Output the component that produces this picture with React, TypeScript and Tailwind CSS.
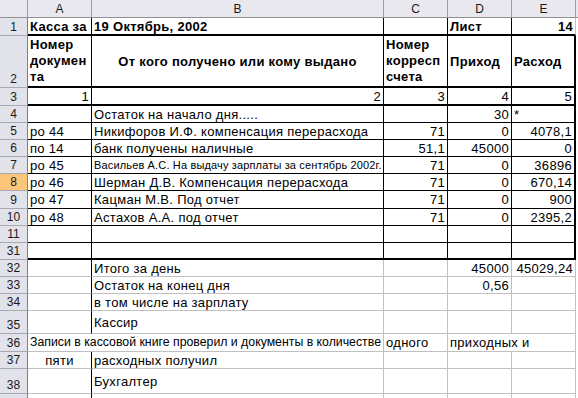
import React from "react";

const F = "font-['Liberation_Sans',Arial,sans-serif]";

const RH =
  "w-[28px] shrink-0 bg-[#e2e2ea] border-r border-b border-r-[#7f7f86] border-b-[#a8a8b0] text-[12px] leading-none flex items-end justify-center pb-[2px] text-[#1a1a1a]";
const RH_SEL =
  "w-[28px] shrink-0 bg-[#fbc67a] border-r border-b border-r-[#7f7f86] border-b-[#a8a8b0] text-[12px] leading-none flex items-end justify-center pb-[2px] text-[#1a1a1a]";

const CH =
  "shrink-0 bg-[#e8e8ee] border-r border-b border-r-[#9d9da4] border-b-[#8f8f96] text-[12px] leading-none flex items-center justify-center text-[#1a1a1a]";

// body cell base
const C =
  "shrink-0 flex items-center px-[2px] overflow-hidden whitespace-nowrap text-[13px] leading-[15px] tracking-[0.3px] text-black";

// border presets
const TB = "border-r border-b border-r-black border-b-black"; // thin black
const TB2 = "border-r border-b-2 border-r-black border-b-black"; // thin right, thick bottom
const EB = "border-r-2 border-b border-r-black border-b-black"; // E column thin bottom
const EB2 = "border-r-2 border-b-2 border-r-black border-b-black"; // E column thick bottom
const G = "border-r border-b border-r-[#c0c0c0] border-b-[#c0c0c0]"; // gray grid
const GA = "border-r border-b border-r-black border-b-[#c0c0c0]"; // A in bottom part
const GN = "border-b border-b-[#c0c0c0]"; // no right line

type DataRow = {
  n: string;
  a: string;
  b: string;
  c: string;
  d: string;
  e: string;
  small?: boolean;
  sel?: boolean;
};

const rows: DataRow[] = [
  { n: "5", a: "ро 44", b: "Никифоров И.Ф. компенсация перерасхода", c: "71", d: "0", e: "4078,1" },
  { n: "6", a: "по 14", b: "банк получены наличные", c: "51,1", d: "45000", e: "0" },
  {
    n: "7",
    a: "ро 45",
    b: "Васильев А.С. На выдачу зарплаты за сентябрь 2002г.",
    c: "71",
    d: "0",
    e: "36896",
    small: true,
  },
  { n: "8", a: "ро 46", b: "Шерман Д.В. Компенсация перерасхода", c: "71", d: "0", e: "670,14", sel: true },
  { n: "9", a: "ро 47", b: "Кацман М.В. Под отчет", c: "71", d: "0", e: "900" },
  { n: "10", a: "ро 48", b: "Астахов А.А. под отчет", c: "71", d: "0", e: "2395,2" },
];

export default function App() {
  return (
    <div className={`w-[578px] h-[398px] overflow-hidden bg-white ${F}`}>
      {/* column header */}
      <div className="flex h-[18px]">
        <div className="w-[28px] shrink-0 bg-[#e8e8ee] border-r border-b border-r-[#9d9da4] border-b-[#8f8f96]" />
        <div className={`${CH} w-[64px]`}>A</div>
        <div className={`${CH} w-[292px]`}>B</div>
        <div className={`${CH} w-[64px]`}>C</div>
        <div className={`${CH} w-[64px]`}>D</div>
        <div className={`${CH} w-[64px]`}>E</div>
        <div className="flex-1 bg-[#e8e8ee] border-b border-b-[#8f8f96]" />
      </div>

      {/* row 1 */}
      <div className="flex h-[18px]">
        <div className={RH}>1</div>
        <div className={`${C} ${TB2} w-[64px] font-bold`}>Касса за</div>
        <div className={`${C} ${TB2} w-[292px] font-bold`}>19 Октябрь, 2002</div>
        <div className={`${C} ${TB2} w-[64px]`} />
        <div className={`${C} ${TB2} w-[64px] font-bold`}>Лист</div>
        <div className={`${C} border-r border-b-2 border-r-[#c0c0c0] border-b-black w-[64px] font-bold justify-end`}>14</div>
      </div>

      {/* row 2 */}
      <div className="flex h-[52px]">
        <div className={RH}>2</div>
        <div className={`${C} ${TB2} w-[64px] font-bold !items-end !leading-[16px] pb-[1px] whitespace-normal`}>
          <span>
            Номер
            <br />
            докумен
            <br />
            та
          </span>
        </div>
        <div className={`${C} ${TB2} w-[292px] font-bold justify-center`}>От кого получено или кому выдано</div>
        <div className={`${C} ${TB2} w-[64px] font-bold !items-end !leading-[16px] pb-[1px] whitespace-normal`}>
          <span>
            Номер
            <br />
            корресп
            <br />
            счета
          </span>
        </div>
        <div className={`${C} ${TB2} w-[64px] font-bold`}>Приход</div>
        <div className={`${C} ${EB2} w-[64px] font-bold`}>Расход</div>
      </div>

      {/* row 3 */}
      <div className="flex h-[18px]">
        <div className={RH}>3</div>
        <div className={`${C} ${TB2} w-[64px] justify-end`}>1</div>
        <div className={`${C} ${TB2} w-[292px] justify-end`}>2</div>
        <div className={`${C} ${TB2} w-[64px] justify-end`}>3</div>
        <div className={`${C} ${TB2} w-[64px] justify-end`}>4</div>
        <div className={`${C} ${EB2} w-[64px] justify-end`}>5</div>
      </div>

      {/* row 4 */}
      <div className="flex h-[17px]">
        <div className={RH}>4</div>
        <div className={`${C} ${TB} w-[64px]`} />
        <div className={`${C} ${TB} w-[292px]`}>Остаток на начало дня.....</div>
        <div className={`${C} ${TB} w-[64px]`} />
        <div className={`${C} ${TB} w-[64px] justify-end`}>30</div>
        <div className={`${C} ${EB} w-[64px]`}>*</div>
      </div>

      {rows.map((r) => (
        <div key={r.n} className={r.n === "9" ? "flex h-[18px]" : "flex h-[17px]"}>
          <div className={r.sel ? RH_SEL : RH}>{r.n}</div>
          <div className={`${C} ${TB} w-[64px]`}>{r.a}</div>
          <div className={`${C} ${TB} w-[292px] ${r.small ? "!text-[11px] !tracking-[0.15px]" : ""}`}>{r.b}</div>
          <div className={`${C} ${TB} w-[64px] justify-end`}>{r.c}</div>
          <div className={`${C} ${TB} w-[64px] justify-end`}>{r.d}</div>
          <div className={`${C} ${EB} w-[64px] justify-end`}>{r.e}</div>
        </div>
      ))}

      {/* row 11 */}
      <div className="flex h-[17px]">
        <div className={RH}>11</div>
        <div className={`${C} ${TB} w-[64px]`} />
        <div className={`${C} ${TB} w-[292px]`} />
        <div className={`${C} ${TB} w-[64px]`} />
        <div className={`${C} ${TB} w-[64px]`} />
        <div className={`${C} ${EB} w-[64px]`} />
      </div>

      {/* row 31 */}
      <div className="flex h-[17px]">
        <div className={RH}>31</div>
        <div className={`${C} ${TB2} w-[64px]`} />
        <div className={`${C} ${TB2} w-[292px]`} />
        <div className={`${C} ${TB2} w-[64px]`} />
        <div className={`${C} ${TB2} w-[64px]`} />
        <div className={`${C} ${EB2} w-[64px]`} />
      </div>

      {/* row 32 */}
      <div className="flex h-[17px]">
        <div className={RH}>32</div>
        <div className={`${C} ${GA} w-[64px]`} />
        <div className={`${C} ${G} w-[292px]`}>Итого за день</div>
        <div className={`${C} ${G} w-[64px]`} />
        <div className={`${C} ${G} w-[64px] justify-end`}>45000</div>
        <div className={`${C} ${G} w-[64px] justify-end`}>45029,24</div>
      </div>

      {/* row 33 */}
      <div className="flex h-[17px]">
        <div className={RH}>33</div>
        <div className={`${C} ${GA} w-[64px]`} />
        <div className={`${C} ${G} w-[292px]`}>Остаток на конец дня</div>
        <div className={`${C} ${G} w-[64px]`} />
        <div className={`${C} ${G} w-[64px] justify-end`}>0,56</div>
        <div className={`${C} ${G} w-[64px]`} />
      </div>

      {/* row 34 */}
      <div className="flex h-[17px]">
        <div className={RH}>34</div>
        <div className={`${C} ${GA} w-[64px]`} />
        <div className={`${C} ${G} w-[292px]`}>в том числе на зарплату</div>
        <div className={`${C} ${G} w-[64px]`} />
        <div className={`${C} ${G} w-[64px]`} />
        <div className={`${C} ${G} w-[64px]`} />
      </div>

      {/* row 35 */}
      <div className="flex h-[23px]">
        <div className={RH}>35</div>
        <div className={`${C} ${GA} w-[64px]`} />
        <div className={`${C} ${G} w-[292px]`}>Кассир</div>
        <div className={`${C} ${G} w-[64px]`} />
        <div className={`${C} ${G} w-[64px]`} />
        <div className={`${C} ${G} w-[64px]`} />
      </div>

      {/* row 36 */}
      <div className="flex h-[18px]">
        <div className={RH}>36</div>
        <div className={`${C} ${G} w-[356px] !text-[12.3px] !tracking-[0px]`}>
          Записи в кассовой книге проверил и документы в количестве
        </div>
        <div className={`${C} ${G} w-[64px]`}>одного</div>
        <div className={`${C} ${G} w-[128px]`}>приходных и</div>
      </div>

      {/* row 37 */}
      <div className="flex h-[17px]">
        <div className={RH}>37</div>
        <div className={`${C} ${GA} w-[64px] justify-center`}>пяти</div>
        <div className={`${C} ${G} w-[292px]`}>расходных получил</div>
        <div className={`${C} ${G} w-[64px]`} />
        <div className={`${C} ${G} w-[64px]`} />
        <div className={`${C} ${G} w-[64px]`} />
      </div>

      {/* row 38 */}
      <div className="flex h-[25px]">
        <div className={RH}>38</div>
        <div className={`${C} ${GA} w-[64px]`} />
        <div className={`${C} ${G} w-[292px]`}>Бухгалтер</div>
        <div className={`${C} ${G} w-[64px]`} />
        <div className={`${C} ${G} w-[64px]`} />
        <div className={`${C} ${G} w-[64px]`} />
      </div>

      {/* row 39 (partial) */}
      <div className="flex h-[17px]">
        <div className={RH} />
        <div className={`${C} ${GA} w-[64px]`} />
        <div className={`${C} ${G} w-[292px]`} />
        <div className={`${C} ${G} w-[64px]`} />
        <div className={`${C} ${G} w-[64px]`} />
        <div className={`${C} ${G} w-[64px]`} />
        <div className={`${GN} flex-1`} />
      </div>
    </div>
  );
}
